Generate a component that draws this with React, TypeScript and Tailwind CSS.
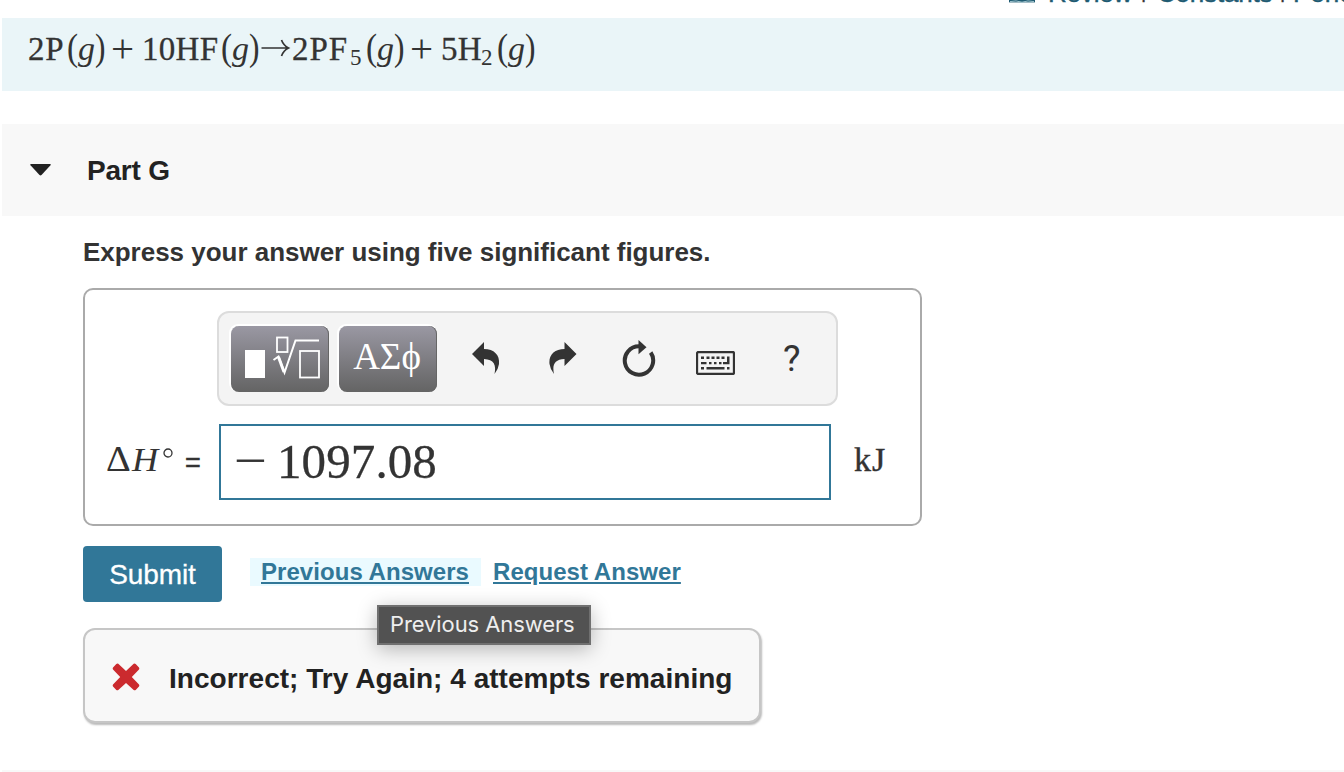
const serif = "font-['Liberation_Serif',serif]";

const TopLinks = () => (
  <div className="flex h-[18px] items-start overflow-hidden pl-[1009px]">
    <svg width="26" height="4" viewBox="0 0 26 4" className="shrink-0">
      <path d="M0 0h26v2.4H0z" fill="#1f5b72" />
      <path d="M1 1.6q6-1.6 12 .6 6-2.2 12-.6" stroke="#9fc3cd" fill="none" />
    </svg>
    <div className="-mt-[22px] ml-[13px] flex text-[26px] leading-[30px] whitespace-nowrap text-[#1f5b72] [-webkit-text-stroke:0.4px]">
      <span className="w-[93px] tracking-[-0.2px]">Review</span>
      <span className="w-[16px] -translate-y-[2px] text-[20px] text-[#333]">|</span>
      <span className="w-[123px] tracking-[-0.2px]">Constants</span>
      <span className="w-[13px] -translate-y-[2px] text-[20px] text-[#333]">|</span>
      <span>Periodic Table</span>
    </div>
  </div>
);

const State = () => (
  <>
    <span className="w-[11px] origin-left scale-x-90 text-[37px]">(</span>
    <span className="w-[17px] text-[34px] italic">g</span>
    <span className="w-[11px] origin-left scale-x-85 text-[37px]">)</span>
  </>
);

const Plus = () => (
  <span className="relative top-[2px] w-[36px] pl-[5px] text-[41px]">+</span>
);

const Equation = () => (
  <div className="ml-[2px] h-[73px] bg-[#eaf5f8] pt-[8px] pl-[26px]">
    <div className="flex h-[40px] items-baseline font-['Liberation_Serif',serif] text-[33px] leading-[40px] whitespace-nowrap text-[#333]">
      <span className="w-[39px] tracking-[0.8px] [-webkit-text-stroke:0.3px]">2P</span>
      <State />
      <Plus />
      <span className="w-[79px] tracking-[0.3px] [-webkit-text-stroke:0.3px]">10HF</span>
      <State />
      <svg width="32" height="20" viewBox="0 0 32 20" className="translate-y-[2px] shrink-0 self-center">
        <path d="M1.500 10h27M21.500 2q2 5.500 7 8q-5 2.500-7 8" fill="none" stroke="#333" strokeWidth="1.700" />
      </svg>
      <span className="w-[58px] tracking-[1px] [-webkit-text-stroke:0.3px]">2PF</span>
      <span className="relative top-[5px] w-[16px] text-[23px]">5</span>
      <State />
      <Plus />
      <span className="w-[40px] tracking-[0.3px] [-webkit-text-stroke:0.3px]">5H</span>
      <span className="relative top-[5px] w-[16px] text-[23px]">2</span>
      <State />
    </div>
  </div>
);

const PartHeader = () => (
  <div className="mt-[33px] ml-[2px] flex h-[92px] items-center bg-[#f8f8f8] pl-[28px]">
    <svg width="21" height="12" viewBox="0 0 21 12">
      <path d="M1 0h19q1.500 0 .500 1.200l-9 9.800q-1 .9-2 0l-9-9.800Q-.5 0 1 0z" fill="#222" />
    </svg>
    <h2 className="ml-[36px] pt-[2px] text-[28px] font-bold tracking-[-0.2px] text-[#222]">Part G</h2>
  </div>
);

const padButton =
  "flex h-[66px] w-[98px] items-center justify-center rounded-[8px] bg-linear-to-b from-[#9a98a3] to-[#646464] shadow-[-1px_-1px_0_1px_#fff,inset_-1px_0_0_#666]";

const Toolbar = () => (
  <div className="flex h-[95px] w-[621px] rounded-[12px] border-2 border-[#dcdcdc] bg-[#f4f4f4] pt-[13px] pl-[12px]">
    <button className={padButton} aria-label="Templates">
      <svg width="98" height="66" viewBox="0 1 98 66" fill="none" stroke="#fff" strokeWidth="1.800">
        <rect x="14" y="25" width="20" height="28" fill="#fff" stroke="none" />
        <rect x="46" y="12.500" width="10.500" height="14.500" />
        <rect x="69" y="26" width="19" height="26.500" />
        <path d="M42.500 35l5-3.500 6 16L64.500 15.500H88" strokeWidth="2" />
        <path d="M47.500 32l5.500 15" strokeWidth="3" />
      </svg>
    </button>
    <button className={padButton + " ml-[10px] " + serif} aria-label="Symbols">
      <span className="relative -top-[2px] -left-[1px] text-[37px] text-white">ΑΣϕ</span>
    </button>
    <svg width="28" height="32" viewBox="0 0 28 32" className="mt-[16px] ml-[35px]">
      <path d="M0 12L12 0v7c10 0 16 6 15 15q-.6 5-4.500 10C24.500 23 22 17.500 12 17v7z" fill="#333" />
    </svg>
    <svg width="28" height="32" viewBox="0 0 28 32" className="mt-[16px] ml-[49px]">
      <path d="M27.500 12l-12-12v7c-10 0-16 6-15 15q.6 5 4.500 10C3 23 5.500 17.500 15.500 17v7z" fill="#333" />
    </svg>
    <svg width="34" height="38" viewBox="0 0 34 38" className="mt-[14px] ml-[45px]">
      <path d="M28.700 12.500A14.200 14.200 0 1 1 17 6.300" fill="none" stroke="#333" strokeWidth="4" />
      <path d="M16.500 0l8 7.200-8 7z" fill="#333" />
    </svg>
    <svg width="39" height="24" viewBox="0 0 39 24" className="mt-[25px] ml-[40px]">
      <rect x="1" y="1" width="37" height="22" rx="1.500" fill="none" stroke="#333" strokeWidth="2.300" />
      <g fill="#333">
        <path d="M5 5.500h3V8H5zM10.500 5.500h3V8h-3zM15.500 5.500h3V8h-3zM20.500 5.500h3V8h-3zM25.500 5.500h3V8h-3z" />
        <path d="M5 11h5.500v2.300H5zM13 11h2.500v2.300H13zM18 11h2.500v2.300H18zM23 11h2.500v2.300H23zM27 11h4V5.500h2.500v7.800H27z" />
        <path d="M5 16h3v2.500H5zM10.500 16h18v2.500h-18zM31 16h2.500v2.500H31z" />
      </g>
    </svg>
    <span className="mt-[11px] ml-[48px] font-[Roboto,sans-serif] text-[37px] leading-[44px] text-[#333]">?</span>
  </div>
);

const AnswerBox = () => (
  <div className="h-[238px] w-[839px] rounded-[10px] border-2 border-[#aaa] pt-[21px]">
    <div className="pl-[132px]">
      <Toolbar />
    </div>
    <div className="mt-[18px] flex h-[76px] items-center pl-[22px] text-[#333]">
      <div className="flex w-[112px] items-center font-['Liberation_Serif',serif] text-[33px] leading-[40px]">
        <span className="w-[25px] origin-left -translate-x-[1px] -translate-y-[2px] scale-x-110 text-[35px]">Δ</span>
        <span className="w-[31px] origin-left -translate-y-[2px] scale-x-110 italic">H</span>
        <svg width="10" height="10" viewBox="0 0 10 10" className="-translate-y-[9px]">
          <circle cx="5" cy="5" r="4" fill="none" stroke="#333" strokeWidth="1.300" />
        </svg>
        <span className="ml-[12px] translate-y-[1px] font-['Liberation_Sans',sans-serif] text-[27px] [-webkit-text-stroke:0.5px]">=</span>
      </div>
      <div className="flex h-[76px] w-[612px] items-center border-2 border-[#317798] pl-[13px] font-['Liberation_Serif',serif] text-[49px] leading-[60px]">
        <span className="w-[43px] origin-left -translate-y-[1px] scale-x-120">−</span>
        <span className="tracking-[0.1px] [-webkit-text-stroke:0.3px]">1097.08</span>
      </div>
      <span className="ml-[23px] -translate-y-[3px] font-['Liberation_Serif',serif] text-[34px] tracking-[1px] [-webkit-text-stroke:0.4px]">kJ</span>
    </div>
  </div>
);

const Actions = () => (
  <div className="relative mt-[20px] flex h-[56px] items-center text-[#317798]">
    <button className="h-[56px] w-[139px] rounded-[4px] bg-[#317798] pt-[1px] text-[28px] tracking-[-0.1px] text-white [-webkit-text-stroke:0.3px]">
      Submit
    </button>
    <div className="-mt-[4px] ml-[28px] flex h-[28px] items-center text-[24px] leading-[28px] font-bold whitespace-nowrap">
      <a className="flex h-[28px] w-[231px] items-center bg-[#eafaff] pl-[11px]">
        <span className="tracking-[0.05px] underline decoration-[1.5px] underline-offset-[2px]">Previous Answers</span>
      </a>
      <a className="ml-[12px] tracking-[0.05px] underline decoration-[1.5px] underline-offset-[2px]">Request Answer</a>
    </div>
    <div className="absolute top-[59px] left-[294px] z-10 flex h-[40px] w-[214px] items-center border-2 border-[#707070] bg-[#525252] pb-[2px] pl-[11px] font-[Inter,sans-serif] text-[22px] tracking-[-0.1px] whitespace-nowrap text-[#eee] shadow-[0_4px_20px_rgba(0,0,0,0.28)]">
      Previous Answers
    </div>
  </div>
);

const Feedback = () => (
  <div className="mt-[26px] flex h-[95px] w-[678px] items-center rounded-[12px] border-2 border-[#c6c6c6] bg-[#f8f8f8] pt-[5px] pl-[27px] shadow-[1px_2px_2px_#bbb]">
    <svg width="28" height="28" viewBox="0 0 28 28" className="-mt-[3px]">
      <path
        d="M6.300 .8L14 8l7.700-7.200q1-.5 2 .3l3.300 3.300q.7 1 0 2L19.800 14l7.200 7.600q.7 1 0 2l-3.300 3.300q-1 .8-2 .2L14 20l-7.700 7.100q-1 .6-2-.2L1 23.600q-.7-1 0-2L8.200 14 1 6.400q-.7-1 0-2l3.300-3.300q1-.8 2-.3z"
        fill="#cb2a2e"
      />
    </svg>
    <p className="ml-[29px] pt-[1px] text-[28px] leading-[32px] font-bold tracking-[0.03px] whitespace-nowrap text-[#222]">
      Incorrect; Try Again; 4 attempts remaining
    </p>
  </div>
);

const App = () => {
  return (
    <main className="flex h-[772px] flex-col overflow-hidden bg-white font-['Liberation_Sans',sans-serif]">
      <TopLinks />
      <Equation />
      <PartHeader />
      <section className="pl-[83px]">
        <p className="my-[18px] text-[26px] leading-[36px] font-bold tracking-[-0.02px] text-[#333]">
          Express your answer using five significant figures.
        </p>
        <AnswerBox />
        <Actions />
        <Feedback />
      </section>
      <div className="mt-auto ml-[2px] h-[2px] bg-[#f8f8f8]" />
    </main>
  );
};

export default App;
